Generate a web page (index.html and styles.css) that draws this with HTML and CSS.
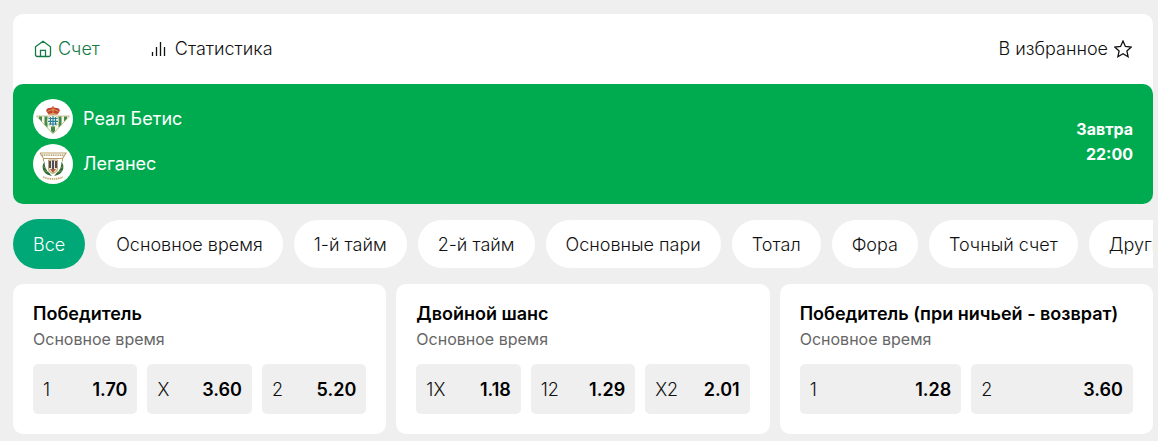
FILE: index.html
```html
<!DOCTYPE html>
<html lang="ru">
<head>
<meta charset="utf-8">
<meta name="viewport" content="width=device-width, initial-scale=1">
<title>Реал Бетис — Леганес</title>
<link rel="stylesheet" href="styles.css">
</head>
<body>
<main class="page">
  <section class="event">
    <nav class="event-nav">
      <button class="nav-item nav-item-active" type="button">
        <svg class="icon" viewBox="0 0 18 18" aria-hidden="true"><path d="M1.5 6.8 9 1.3l7.500 5.500v7.900a1.800 1.800 0 0 1-1.800 1.800H3.300a1.800 1.800 0 0 1-1.800-1.800zM6.500 16.500V10.300h5v6.200"/></svg>
        <span>Счет</span>
      </button>
      <button class="nav-item" type="button">
        <svg class="icon" viewBox="0 0 18 18" aria-hidden="true"><path d="M1.500 12v4M5.500 7v9M9.500 2v14M13.500 7v9"/></svg>
        <span>Статистика</span>
      </button>
      <button class="nav-item nav-favorite" type="button">
        <span>В избранное</span>
        <svg class="icon" viewBox="0 0 18 18" aria-hidden="true"><path d="m9 1 2.4 5.4 5.8.6-4.3 3.9 1.2 5.8L9 13.700l-5.100 3 1.200-5.800L.8 7l5.800-.6z"/></svg>
      </button>
    </nav>
    <div class="scoreboard">
      <div class="teams">
        <div class="team">
          <svg class="crest" viewBox="0 0 40 40" aria-hidden="true">
            <circle cx="20" cy="20" r="20" fill="#fff"/>
            <path d="M3.500 17h33L20 35z" fill="#f3f6e8" stroke="#b9a75e" stroke-width=".7"/>
            <path d="M6 17.500h3V22.500L6 19.500zM11.500 17.500h3v11l-3-3zM18 27h4v5l-2 2-2-2zM25.500 17.500h3v8l-3 3zM31 17.500h3v2l-3 3z" fill="#3f8a4b"/>
            <circle cx="20" cy="22" r="5.800" fill="#f4f8f0" stroke="#c5b76d" stroke-width=".5"/>
            <path d="M15.500 19.500h9M15 22.300h10M16 25h8M17.500 18v8M20 17v10.500M22.500 18v8" stroke="#2b7f93" stroke-width="1.200"/>
            <path d="M15.500 15.500 13.200 12q0-3.500 5.300-3.300L20 7l1.500 1.700q5.300-.2 5.300 3.300l-2.300 3.500z" fill="#c2402f"/>
            <path d="M14.500 12.500q5.500-3.500 11 0M15.500 15.200q4.500-1.500 9 0M20 8v6" fill="none" stroke="#dba85a" stroke-width=".9"/>
          </svg>
          <span>Реал Бетис</span>
        </div>
        <div class="team">
          <svg class="crest" viewBox="0 0 40 40" aria-hidden="true">
            <circle cx="20" cy="20" r="20" fill="#fff"/>
            <path d="M7 9h26l-3.500 5.500v3M7 9l3.500 5.500v3M10.500 14.500h19" fill="none" stroke="#b99f66" stroke-width="1.100"/>
            <path d="M9 11.200h22" stroke="#a58a52" stroke-width="1.200" stroke-dasharray="1.200 .6"/>
            <path d="M11.500 17.500C7 24 11 31 19 32c-2-2-2-3-4.500-4.500-2-3-3-6-3-10zM28.500 17.500C33 24 29 31 21 32c2-2 2-3 4.500-4.500 2-3 3-6 3-10z" fill="#2f6b36"/>
            <path d="m9.500 22 4 3m-2.500 2 5 1M30.500 22l-4 3m2.500 2-5 1" stroke="#8ba657" stroke-width=".7"/>
            <path d="M15.500 16h9v8q0 4-4.500 5.500-4.500-1.500-4.500-5.500z" fill="#eee5cc" stroke="#ae8c50" stroke-width=".8"/>
            <path d="M17 17v7M20 16.500v10M23 17v7" stroke="#303646" stroke-width="1.700"/>
            <path d="M17 25h6l-3 4z" fill="#a85d42"/>
            <path d="M10 33q10 4 20 0" fill="none" stroke="#c7a96a" stroke-width="1.700" stroke-dasharray="1.500 .7"/>
          </svg>
          <span>Леганес</span>
        </div>
      </div>
      <div class="kickoff"><span>Завтра</span><time>22:00</time></div>
    </div>
  </section>

  <div class="filters">
    <button class="chip chip-active" type="button">Все</button>
    <button class="chip" type="button">Основное время</button>
    <button class="chip" type="button">1-й тайм</button>
    <button class="chip" type="button">2-й тайм</button>
    <button class="chip" type="button">Основные пари</button>
    <button class="chip" type="button">Тотал</button>
    <button class="chip" type="button">Фора</button>
    <button class="chip" type="button">Точный счет</button>
    <button class="chip" type="button">Другие</button>
  </div>

  <div class="markets">
    <section class="market">
      <h2 class="market-title">Победитель</h2>
      <p class="market-period">Основное время</p>
      <div class="odds">
        <button class="odd" type="button"><span>1</span><b class="price">1.70</b></button>
        <button class="odd" type="button"><span>X</span><b class="price">3.60</b></button>
        <button class="odd" type="button"><span>2</span><b class="price">5.20</b></button>
      </div>
    </section>
    <section class="market">
      <h2 class="market-title">Двойной шанс</h2>
      <p class="market-period">Основное время</p>
      <div class="odds">
        <button class="odd" type="button"><span>1X</span><b class="price">1.18</b></button>
        <button class="odd" type="button"><span>12</span><b class="price">1.29</b></button>
        <button class="odd" type="button"><span>X2</span><b class="price">2.01</b></button>
      </div>
    </section>
    <section class="market">
      <h2 class="market-title">Победитель (при ничьей - возврат)</h2>
      <p class="market-period">Основное время</p>
      <div class="odds">
        <button class="odd" type="button"><span>1</span><b class="price">1.28</b></button>
        <button class="odd" type="button"><span>2</span><b class="price">3.60</b></button>
      </div>
    </section>
  </div>
</main>
</body>
</html>
```
FILE: styles.css
```css
* { box-sizing: border-box; }
body {
  margin: 0;
  background: #efefef;
  color: #111;
  font-family: Inter, "Noto Sans", sans-serif;
  font-size: 18px;
  font-weight: 300;
  line-height: 24px;
}
button {
  margin: 0;
  border: 0;
  color: inherit;
  font: inherit;
  cursor: pointer;
}
.page { padding: 14px 5px 7px 13px; }
.event {
  border-radius: 10px;
  background: #fff;
}
.event-nav {
  display: flex;
  align-items: center;
  height: 70px;
  padding: 0 21px;
  gap: 51px;
}
.nav-item {
  display: flex;
  align-items: center;
  gap: 6px;
  padding: 0;
  background: none;
}
.nav-item-active { color: #147a45; }
.nav-favorite { margin-left: auto; }
.icon {
  width: 18px;
  height: 18px;
  fill: none;
  stroke: currentColor;
  stroke-width: 1.3;
}
.scoreboard {
  display: flex;
  align-items: center;
  justify-content: space-between;
  padding: 15px 20px 20px;
  border-radius: 10px;
  background: #00ab50;
  color: #fff;
}
.teams { display: grid; gap: 5px; }
.team {
  display: flex;
  align-items: center;
  gap: 10px;
  font-weight: 400;
}
.crest { width: 40px; height: 40px; }
.kickoff {
  display: grid;
  font-size: 16px;
  font-weight: 700;
  line-height: 25px;
  text-align: right;
}
.filters {
  display: flex;
  align-items: center;
  gap: 11px;
  margin: 15px 0;
  overflow: hidden;
}
.chip {
  flex: none;
  height: 48px;
  padding: 2px 20px 0;
  border-radius: 25px;
  background: #fff;
}
.chip-active {
  height: 50px;
  background: #00a878;
  color: #fff;
}
.markets {
  display: grid;
  grid-template-columns: repeat(3, minmax(0, 1fr));
  gap: 10px;
}
.market {
  padding: 18px 20px 20px;
  border-radius: 10px;
  background: #fff;
}
.market-title {
  margin: 0;
  color: #000;
  font-size: 18px;
  font-weight: 600;
  line-height: 24px;
  white-space: nowrap;
}
.market-period {
  margin: 1px 0 13px;
  color: #666;
  font-size: 16px;
  font-weight: 400;
}
.odds {
  display: flex;
  gap: 10px;
}
.odd {
  display: flex;
  flex: 1;
  align-items: center;
  justify-content: space-between;
  height: 50px;
  padding: 2px 10px 0;
  border-radius: 5px;
  background: #efefef;
}
.price {
  color: #000;
  font-weight: 600;
}
```
